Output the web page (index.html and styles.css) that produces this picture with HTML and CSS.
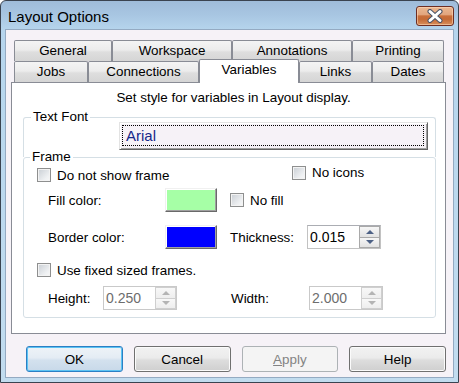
FILE: index.html
```html
<!DOCTYPE html>
<html lang="en">
<head>
    <meta charset="UTF-8">
    <title>Layout Options</title>
    <link rel="stylesheet" href="styles.css">
</head>
<body>
    <div class="window">
        <div class="titlebar">
            <span class="title">Layout Options</span>
            <button class="close">
                <svg width="16" height="14" viewBox="0 0 16 14">
                    <path d="M3 2.5 L13 11.5 M13 2.5 L3 11.5" stroke="#4a5468" stroke-width="5" stroke-linecap="round"/>
                    <path d="M3 2.5 L13 11.5 M13 2.5 L3 11.5" stroke="#ffffff" stroke-width="3" stroke-linecap="round"/>
                </svg>
            </button>
        </div>

        <div class="client">
            <div class="tabs">
                <div class="tab-row">
                    <div class="tab w98">General</div>
                    <div class="tab w120">Workspace</div>
                    <div class="tab w120">Annotations</div>
                    <div class="tab w92">Printing</div>
                </div>
                <div class="tab-row">
                    <div class="tab w74">Jobs</div>
                    <div class="tab w111">Connections</div>
                    <div class="tab w100 selected">Variables</div>
                    <div class="tab w73">Links</div>
                    <div class="tab w72">Dates</div>
                </div>
            </div>

            <div class="panel">
                <p class="intro">Set style for variables in Layout display.</p>

                <fieldset class="group group-font">
                    <legend>Text Font</legend>
                    <button class="font-btn"><span class="focus">Arial</span></button>
                </fieldset>

                <fieldset class="group group-frame">
                    <legend>Frame</legend>

                    <div class="row row-a">
                        <label class="check slot-frame"><span class="box"></span>Do not show frame</label>
                        <label class="check up2"><span class="box"></span>No icons</label>
                    </div>

                    <div class="row row-b">
                        <span class="label slot-label">Fill color:</span>
                        <span class="swatch green"></span>
                        <label class="check"><span class="box"></span>No fill</label>
                    </div>

                    <div class="row row-c">
                        <span class="label slot-label">Border color:</span>
                        <span class="swatch blue"></span>
                        <span class="label slot-thick">Thickness:</span>
                        <div class="spin">
                            <span class="spin-value">0.015</span>
                            <span class="spin-btns">
                                <span class="spin-btn"><span class="arrow up"></span></span>
                                <span class="spin-btn"><span class="arrow down"></span></span>
                            </span>
                        </div>
                    </div>

                    <div class="row row-d">
                        <label class="check"><span class="box"></span>Use fixed sized frames.</label>
                    </div>

                    <div class="row row-e">
                        <span class="label slot-height">Height:</span>
                        <div class="spin disabled">
                            <span class="spin-value">0.250</span>
                            <span class="spin-btns">
                                <span class="spin-btn"><span class="arrow up"></span></span>
                                <span class="spin-btn"><span class="arrow down"></span></span>
                            </span>
                        </div>
                        <span class="label slot-width">Width:</span>
                        <div class="spin disabled">
                            <span class="spin-value">2.000</span>
                            <span class="spin-btns">
                                <span class="spin-btn"><span class="arrow up"></span></span>
                                <span class="spin-btn"><span class="arrow down"></span></span>
                            </span>
                        </div>
                    </div>
                </fieldset>
            </div>

            <div class="buttons">
                <button class="btn default">OK</button>
                <button class="btn">Cancel</button>
                <button class="btn disabled"><u>A</u>pply</button>
                <button class="btn">Help</button>
            </div>
        </div>
    </div>
</body>
</html>
```

FILE: styles.css
```css
html, body {
    margin: 0;
    padding: 0;
}

body {
    font-family: "Liberation Sans", Arial, sans-serif;
    font-size: 13.4px;
    color: #000000;
    background: #ffffff;
}

.window {
    width: 459px;
    height: 383px;
    box-sizing: border-box;
    border: 1px solid #3a4350;
    border-radius: 6px 6px 0 0;
    background: linear-gradient(#9fbcda 0px, #a8c6e2 14px, #b6d5ed 29px, #c2dcef 383px);
    overflow: hidden;
}

/* title bar */

.titlebar {
    height: 28px;
    display: flex;
    align-items: center;
    justify-content: space-between;
    padding: 0 4px 0 7px;
}

.title {
    font-size: 15px;
    padding-top: 2px;
    color: #000000;
}

.close {
    width: 38px;
    height: 20px;
    padding: 0;
    margin-top: 1px;
    border: 1px solid #6e2e22;
    border-radius: 3px;
    background: linear-gradient(#ebb892 0%, #e2a57e 42%, #c96f3b 50%, #c46a36 68%, #d98f5b 100%);
    box-shadow: inset 0 0 0 1px rgba(255, 220, 190, 0.55);
    display: flex;
    align-items: center;
    justify-content: center;
}

/* client area */

.client {
    margin: 0 4px 4px;
    height: 349px;
    box-sizing: border-box;
    border: 1px solid #94aac2;
    background: #f6f2f7;
    padding: 10px 7px 0 5px;
}

.tabs {
    margin-left: 3px;
}

.tab-row {
    display: flex;
    align-items: flex-start;
}

.tab {
    height: 21px;
    box-sizing: border-box;
    border: 1px solid #898c95;
    border-bottom: 0;
    border-radius: 2px 2px 0 0;
    background: linear-gradient(#f4f4f4, #ececec 45%, #dedede 55%, #d5d5d5);
    line-height: 20px;
    text-align: center;
    white-space: nowrap;
}

.tab.selected {
    height: 24px;
    margin-top: -2px;
    margin-bottom: -1px;
    background: #ffffff;
    position: relative;
    z-index: 1;
    line-height: 20px;
}

.w98 { width: 98px; }
.w120 { width: 120px; }
.w92 { width: 92px; }
.w74 { width: 74px; }
.w111 { width: 111px; }
.w100 { width: 100px; }
.w73 { width: 73px; }
.w72 { width: 72px; }

.panel {
    height: 252px;
    box-sizing: border-box;
    border: 1px solid #898c95;
    background: #ffffff;
    padding-top: 7px;
}

.intro {
    margin: 0;
    padding-left: 10px;
    line-height: 16px;
    text-align: center;
}

/* group boxes */

.group {
    margin: 0 9px 0 11px;
    padding: 0;
    border: 1px solid #d5dfe5;
    border-radius: 3px;
    min-width: 0;
}

.group legend {
    line-height: 14px;
    padding: 0 2px;
}

.group-font {
    margin-top: 4px;
    padding-bottom: 7px;
    border-bottom: 0;
    border-radius: 3px 3px 0 0;
}

.group-font legend {
    margin-left: 7px;
}

.group-frame {
    margin-top: -7px;
    padding-bottom: 7px;
}

.group-frame legend {
    margin-left: 6px;
}

.font-btn {
    display: block;
    margin: -2px 0 0 95px;
    width: 309px;
    height: 28px;
    padding: 2px 3px 3px 2px;
    box-sizing: border-box;
    border: 1px solid;
    border-color: #e3e3e3 #646464 #646464 #e3e3e3;
    box-shadow: inset 1px 1px 0 #ffffff, inset -1px -1px 0 #a0a0a0;
    background: #f6f2f7;
    text-align: left;
    font-family: "Liberation Sans", Arial, sans-serif;
}

.focus {
    display: block;
    height: 100%;
    box-sizing: border-box;
    border: 1px dotted #000000;
    padding-left: 3px;
    font-size: 15px;
    line-height: 20px;
    color: #17288a;
}

/* frame rows */

.row {
    display: flex;
    align-items: center;
    padding-left: 24px;
}

.row-a {
    height: 22px;
    padding-left: 13px;
}

.row-b {
    height: 28px;
}

.row-c {
    height: 30px;
    margin-top: 8px;
}

.row-d {
    height: 20px;
    margin-top: 8px;
    padding-left: 13px;
}

.row-e {
    height: 24px;
    margin-top: 6px;
}

.label {
    white-space: nowrap;
}

.slot-frame { width: 255px; }
.slot-label { width: 117px; }
.slot-thick { width: 77px; }
.slot-height { width: 55px; }
.slot-width { width: 78px; margin-left: 54px; }

.up2 {
    margin-bottom: 5px;
}

.check {
    display: flex;
    align-items: center;
    gap: 6px;
    white-space: nowrap;
}

.box {
    width: 14px;
    height: 14px;
    box-sizing: border-box;
    border: 1px solid #8e8f8f;
    background: linear-gradient(135deg, #c9ced4, #eef0f2 70%, #f8f8f8);
    box-shadow: inset 0 0 0 1px #f3f3f3;
}

.swatch {
    width: 52px;
    height: 24px;
    box-sizing: border-box;
    border: 1px solid;
    border-color: #f0f0f0 #696969 #696969 #f0f0f0;
    box-shadow: inset -1px -1px 0 #a0a0a0, inset 1px 1px 0 #ffffff;
    margin-right: 13px;
}

.swatch.green {
    background: #a6ffa6;
}

.swatch.blue {
    background: #0000ff;
}

/* spinners */

.spin {
    width: 74px;
    height: 24px;
    box-sizing: border-box;
    border: 1px solid #c2c2c2;
    border-top-color: #abadb3;
    background: #ffffff;
    display: flex;
    align-items: center;
    justify-content: space-between;
}

.spin-value {
    padding-left: 2px;
    font-size: 14px;
}

.spin-btns {
    display: flex;
    flex-direction: column;
    width: 21px;
    height: 22px;
}

.spin-btn {
    flex: 1;
    box-sizing: border-box;
    border: 1px solid #a9a9a9;
    background: linear-gradient(#f6f6f6, #e2e2e2);
    display: flex;
    align-items: center;
    justify-content: center;
}

.spin-btn + .spin-btn {
    border-top: 0;
}

.arrow {
    width: 0;
    height: 0;
    border-left: 4px solid transparent;
    border-right: 4px solid transparent;
}

.arrow.up {
    border-bottom: 4px solid #4d6185;
}

.arrow.down {
    border-top: 4px solid #4d6185;
}

.spin.disabled {
    border-color: #c9c9c9;
}

.spin.disabled .spin-value {
    color: #6d6d6d;
}

.spin.disabled .spin-btn {
    border-color: #cfcfcf;
    background: linear-gradient(#f8f8f8, #eeeeee);
}

.spin.disabled .arrow.up {
    border-bottom-color: #b4b4b4;
}

.spin.disabled .arrow.down {
    border-top-color: #b4b4b4;
}

/* dialog buttons */

.buttons {
    display: flex;
    gap: 11px;
    margin-top: 12px;
    padding-left: 15px;
}

.btn {
    width: 97px;
    height: 26px;
    box-sizing: border-box;
    border: 1px solid #707070;
    border-radius: 3px;
    background: linear-gradient(#f2f2f2, #ebebeb 45%, #dddddd 55%, #cfcfcf);
    box-shadow: inset 0 0 0 1px #fbfbfb;
    font-family: "Liberation Sans", Arial, sans-serif;
    font-size: 13.4px;
    color: #000000;
    padding: 0;
}

.btn.default {
    border-color: #2c7fc4;
    background: linear-gradient(#eef3f8, #e4ecf4 45%, #d3e1ee 55%, #c8d9e9);
    box-shadow: inset 0 0 0 1px #5cc3f3;
}

.btn.disabled {
    border-color: #adb2b5;
    background: #f4f4f4;
    box-shadow: none;
    color: #838383;
}
```
